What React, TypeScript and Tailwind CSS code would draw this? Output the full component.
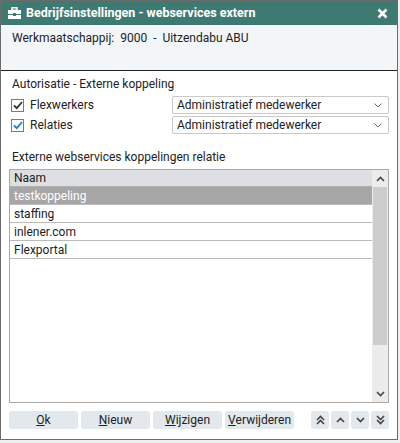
import React from 'react';

const rows = ['testkoppeling', 'staffing', 'inlener.com', 'Flexportal'];

function Chevron({ dir }: { dir: 'up' | 'down' }) {
  return (
    <svg width="9" height="6" viewBox="0 0 9 6">
      <path
        d={dir === 'up' ? 'M1 5 L4.5 1.5 L8 5' : 'M1 1 L4.5 4.5 L8 1'}
        fill="none"
        stroke="#444"
        strokeWidth="1.6"
      />
    </svg>
  );
}

function DoubleChevron({ dir }: { dir: 'up' | 'down' }) {
  return (
    <svg width="9" height="10" viewBox="0 0 9 10">
      <path
        d={dir === 'up' ? 'M1 5 L4.5 1.5 L8 5 M1 9 L4.5 5.5 L8 9' : 'M1 1 L4.5 4.5 L8 1 M1 5 L4.5 8.5 L8 5'}
        fill="none"
        stroke="#444"
        strokeWidth="1.6"
      />
    </svg>
  );
}

function Check({ color }: { color: string }) {
  return (
    <span className="w-[13px] h-[13px] border border-[#7a7a7a] bg-white flex items-center justify-center">
      <svg width="10" height="9" viewBox="0 0 10 9">
        <path d="M1 4.5 L3.8 7.2 L9 1" fill="none" stroke={color} strokeWidth="1.8" />
      </svg>
    </span>
  );
}

function Select() {
  return (
    <div className="w-[217px] h-[18px] border border-[#c9c9c9] rounded-[2px] bg-white flex items-center justify-between pl-[4px] pr-[6px]">
      <span>Administratief medewerker</span>
      <svg width="8" height="5" viewBox="0 0 8 5">
        <path d="M0.5 0.5 L4 4 L7.5 0.5" fill="none" stroke="#666" strokeWidth="1" />
      </svg>
    </div>
  );
}

function Btn({ u, rest }: { u: string; rest: string }) {
  return (
    <button className="w-[69px] h-[18px] bg-[#e3e8ec] rounded-[3px] text-[12px] text-[#222] flex items-center justify-center">
      <span className="underline">{u}</span>
      {rest}
    </button>
  );
}

export default function App() {
  return (
    <div className="w-[400px] h-[443px] bg-[#f0f0f0] text-[12px] leading-[18px] text-[#222]" style={{ fontFamily: 'Roboto, "Liberation Sans", sans-serif' }}>
      <div className="w-[398px] h-[440px] border border-[#6b6b6b] bg-white flex flex-col">
        {/* title bar */}
        <div className="h-[24px] bg-[#3e7a72] flex items-center justify-between pl-[7px] pr-[9px] text-white font-bold text-[12.5px]">
          <div className="flex items-center gap-[5px]">
            <svg width="13" height="12" viewBox="0 0 13 12">
              <rect x="4" y="0.8" width="5" height="2.5" fill="none" stroke="#fff" strokeWidth="1.4" />
              <rect x="0" y="3" width="13" height="4" fill="#fff" />
              <rect x="0" y="8" width="13" height="4" fill="#fff" />
              <rect x="5" y="6" width="3" height="3" fill="#3e7a72" />
            </svg>
            <span>Bedrijfsinstellingen - webservices extern</span>
          </div>
          <svg width="11" height="11" viewBox="0 0 11 11">
            <path d="M1.5 1.5 L9.5 9.5 M9.5 1.5 L1.5 9.5" stroke="#fff" strokeWidth="2.6" />
          </svg>
        </div>

        {/* header */}
        <div className="h-[46px] bg-[#f2f6f9] border-b border-[#222] pl-[11px] pt-[4px] whitespace-pre">
          Werkmaatschappij:  9000  -  Uitzendabu ABU
        </div>

        {/* body */}
        <div className="flex-1 flex flex-col px-[8px] pt-[4px]">
          <div className="pl-[3px]">Autorisatie - Externe koppeling</div>
          <div className="mt-[3px] flex flex-col gap-[2px]">
            <div className="flex items-center justify-between">
              <div className="flex items-center gap-[6px] pl-[2px]">
                <Check color="#333" />
                <span>Flexwerkers</span>
              </div>
              <Select />
            </div>
            <div className="flex items-center justify-between">
              <div className="flex items-center gap-[6px] pl-[2px]">
                <Check color="#1a7fd6" />
                <span>Relaties</span>
              </div>
              <Select />
            </div>
          </div>

          <div className="pl-[3px] mt-[14px]">Externe webservices koppelingen relatie</div>

          <div className="mt-[3px] h-[234px] border border-[#a9a9a9] flex">
            <div className="flex-1 flex flex-col">
              <div className="h-[17px] bg-[#dedfe3] border-b border-[#b0b0b0] pl-[4px] flex items-center">Naam</div>
              {rows.map((r, i) => (
                <div
                  key={r}
                  className={
                    i === 0
                      ? 'h-[18px] bg-[#a6a6a6] text-white border-b border-[#bbbbbb] pl-[4px] flex items-center'
                      : 'h-[18px] bg-white border-b border-[#bbbbbb] pl-[4px] flex items-center'
                  }
                >
                  {r}
                </div>
              ))}
            </div>
            <div className="w-[16px] flex flex-col bg-[#ececec]">
              <div className="h-[17px] flex items-center justify-center">
                <Chevron dir="up" />
              </div>
              <div className="mx-[1px] h-[158px] bg-[#cdcdcd]" />
              <div className="flex-1" />
              <div className="h-[17px] flex items-center justify-center">
                <Chevron dir="down" />
              </div>
            </div>
          </div>

          <div className="mt-[8px] flex items-center">
            <div className="flex gap-[3px]">
              <Btn u="O" rest="k" />
              <Btn u="N" rest="ieuw" />
              <Btn u="W" rest="ijzigen" />
              <Btn u="V" rest="erwijderen" />
            </div>
            <div className="ml-auto flex gap-[2px]">
              <button className="w-[18px] h-[18px] bg-[#e3e8ec] rounded-[3px] flex items-center justify-center"><DoubleChevron dir="up" /></button>
              <button className="w-[18px] h-[18px] bg-[#e3e8ec] rounded-[3px] flex items-center justify-center"><Chevron dir="up" /></button>
              <button className="w-[18px] h-[18px] bg-[#e3e8ec] rounded-[3px] flex items-center justify-center"><Chevron dir="down" /></button>
              <button className="w-[18px] h-[18px] bg-[#e3e8ec] rounded-[3px] flex items-center justify-center"><DoubleChevron dir="down" /></button>
            </div>
          </div>
        </div>
      </div>
    </div>
  );
}
